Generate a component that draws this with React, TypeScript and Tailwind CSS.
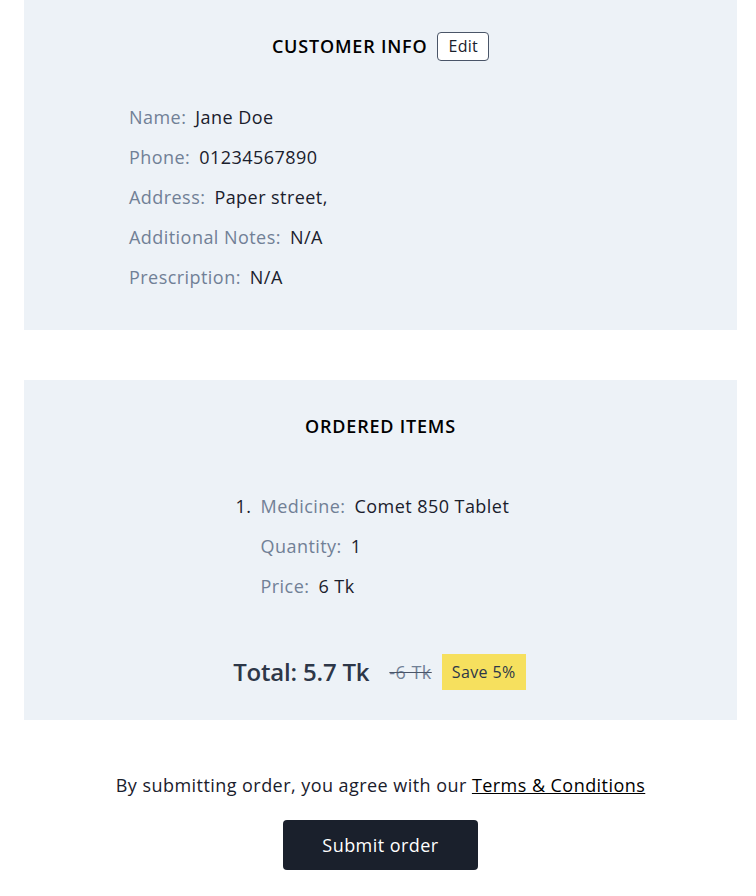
export default function App() {
  const customer = [
    { label: "Name", value: "Jane Doe" },
    { label: "Phone", value: "01234567890" },
    { label: "Address", value: "Paper street," },
    { label: "Additional Notes", value: "N/A" },
    { label: "Prescription", value: "N/A" },
  ];
  const item = [
    { label: "Medicine", value: "Comet 850 Tablet" },
    { label: "Quantity", value: "1" },
    { label: "Price", value: "6 Tk" },
  ];

  return (
    <div
      className="min-h-screen bg-white pl-[24px] pr-[19px] text-[18px] tracking-[0.45px] text-[#1a202c]"
      style={{ fontFamily: '"Open Sans", "Noto Sans", sans-serif' }}
    >
      {/* customer info */}
      <section className="bg-[#edf2f7] pt-[31px] pb-[33px]">
        <div className="flex items-center justify-center gap-[10px] h-[30px]">
          <h2 className="font-semibold tracking-[0.8px] text-black">CUSTOMER INFO</h2>
          <button className="h-[29px] px-[10px] text-[16px] tracking-[0.3px] bg-white border border-[#4a5568] rounded-[4px] leading-none">
            Edit
          </button>
        </div>
        <ul className="mt-[36px] pl-[105px]">
          {customer.map((row) => (
            <li key={row.label} className="h-[40px] flex items-center">
              <span className="text-[#718096]">{row.label}:</span>
              <span className="ml-[9px]">{row.value}</span>
            </li>
          ))}
        </ul>
      </section>

      {/* ordered items */}
      <section className="mt-[50px] bg-[#edf2f7] pt-[31px] pb-[30px]">
        <div className="flex items-center justify-center h-[30px]">
          <h2 className="font-semibold tracking-[0.8px] text-black">ORDERED ITEMS</h2>
        </div>
        <div className="mt-[45px] flex justify-center pr-[16px]">
          <ol className="w-[274px] flex">
            <li className="h-[40px] w-[25px] flex items-center">1.</li>
            <li>
              <ul>
                {item.map((row) => (
                  <li key={row.label} className="h-[40px] flex items-center">
                    <span className="text-[#718096]">{row.label}:</span>
                    <span className="ml-[9px]">{row.value}</span>
                  </li>
                ))}
              </ul>
            </li>
          </ol>
        </div>
        <div className="mt-[48px] flex items-center justify-center gap-[10px] pr-[2px]">
          <span className="text-[24px] font-semibold tracking-[-0.2px] text-[#2d3748]">Total: 5.7 Tk</span>
          <span className="ml-[10px] text-[#718096] line-through decoration-[#4a5568]">-6 Tk</span>
          <span className="h-[36px] px-[10px] flex items-center bg-[#f6e05e] text-[16px] tracking-[0.4px] text-[#2d3748]">
            Save 5%
          </span>
        </div>
      </section>

      {/* footer */}
      <div className="mt-[52px] flex flex-col items-center">
        <p className="leading-[27px]">
          By submitting order, you agree with our{" "}
          <a href="#" className="underline text-black">
            Terms &amp; Conditions
          </a>
        </p>
        <button className="mt-[21px] w-[195px] h-[50px] rounded-[4px] bg-[#1a202c] text-white">
          Submit order
        </button>
      </div>
    </div>
  );
}
